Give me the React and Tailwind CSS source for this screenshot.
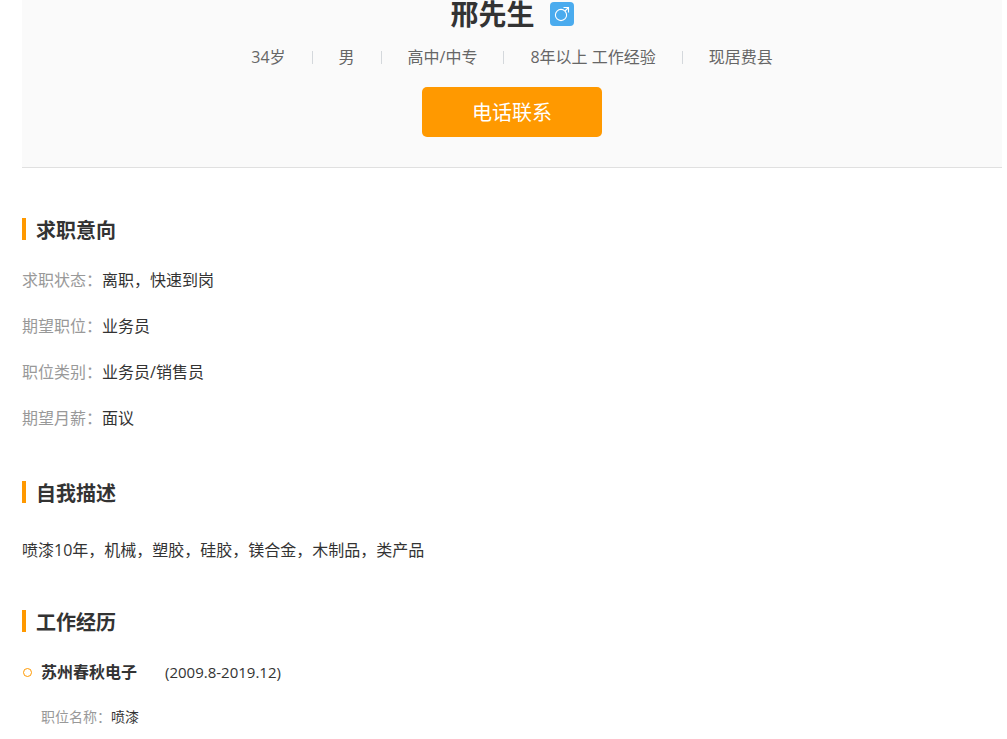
const profile = {
  name: '邢先生',
  tags: ['34岁', '男', '高中/中专', '8年以上 工作经验', '现居费县'],
  description: '喷漆10年，机械，塑胶，硅胶，镁合金，木制品，类产品',
};

const intentions = [
  { label: '求职状态：', value: '离职，快速到岗' },
  { label: '期望职位：', value: '业务员' },
  { label: '职位类别：', value: '业务员/销售员' },
  { label: '期望月薪：', value: '面议' },
];

const jobs = [{ company: '苏州春秋电子', period: '(2009.8-2019.12)', title: '喷漆' }];

function MaleBadge() {
  return (
    <svg viewBox="0 0 24 24" className="h-6 w-6" role="img" aria-label="男">
      <rect width="24" height="24" rx="4" fill="#4aabee" />
      <g fill="none" stroke="#fff" strokeWidth="1.1">
        <circle cx="11" cy="13" r="5.6" />
        <path d="M15 9 L18.5 5.5 M13.5 5.5 H18.5 V10.5" />
      </g>
    </svg>
  );
}

function SectionTitle({ children }) {
  return (
    <h2 className="flex h-[22px] items-center border-l-4 border-[#ff9900] pt-[3px] pl-[10px] text-[20px] leading-6 font-bold text-[#333]">
      {children}
    </h2>
  );
}

export default function App() {
  return (
    <div
      lang="zh-CN"
      className="mr-[5px] ml-[22px] bg-white font-['Open_Sans','Noto_Sans_CJK_SC',sans-serif] text-[16px] leading-6 text-[#333]"
    >
      <header className="flex flex-col items-center border-b border-[#e0e0e0] bg-[#fafafa] pb-[30px]">
        <div className="flex h-7 items-center gap-[15px]">
          <h1 className="text-[28px] leading-7 font-bold">{profile.name}</h1>
          <MaleBadge />
        </div>

        <ul className="mt-[17px] flex items-center text-[#666]">
          {profile.tags.map((tag, i) => (
            <li key={tag} className="flex items-center">
              {i > 0 && <span className="mx-[26px] h-[13px] w-px bg-[#d4d8dc]" />}
              {tag}
            </li>
          ))}
        </ul>

        <button
          type="button"
          className="mt-[18px] h-[50px] w-[180px] rounded-[5px] bg-[#ff9900] pt-[2px] text-[20px] text-white"
        >
          电话联系
        </button>
      </header>

      <main>
        <section className="mt-[50px]">
          <SectionTitle>求职意向</SectionTitle>
          <dl className="mt-[17px]">
            {intentions.map((item) => (
              <div key={item.label} className="flex h-[46px] items-center">
                <dt className="text-[#999]">{item.label}</dt>
                <dd>{item.value}</dd>
              </div>
            ))}
          </dl>
        </section>

        <section className="mt-[40px]">
          <SectionTitle>自我描述</SectionTitle>
          <p className="mt-[35px]">{profile.description}</p>
        </section>

        <section className="mt-[48px]">
          <SectionTitle>工作经历</SectionTitle>
          {jobs.map((job) => (
            <article key={job.company} className="mt-[28px]">
              <div className="flex items-center">
                <span className="ml-px h-[9px] w-[9px] rounded-full border border-[#ff9900]" />
                <h3 className="ml-[9px] font-bold">{job.company}</h3>
                <span className="ml-[28px] text-[15px]">{job.period}</span>
              </div>
              <dl className="mt-[21px] ml-[19px] flex text-[14px]">
                <dt className="text-[#999]">职位名称：</dt>
                <dd>{job.title}</dd>
              </dl>
            </article>
          ))}
        </section>
      </main>
    </div>
  );
}
